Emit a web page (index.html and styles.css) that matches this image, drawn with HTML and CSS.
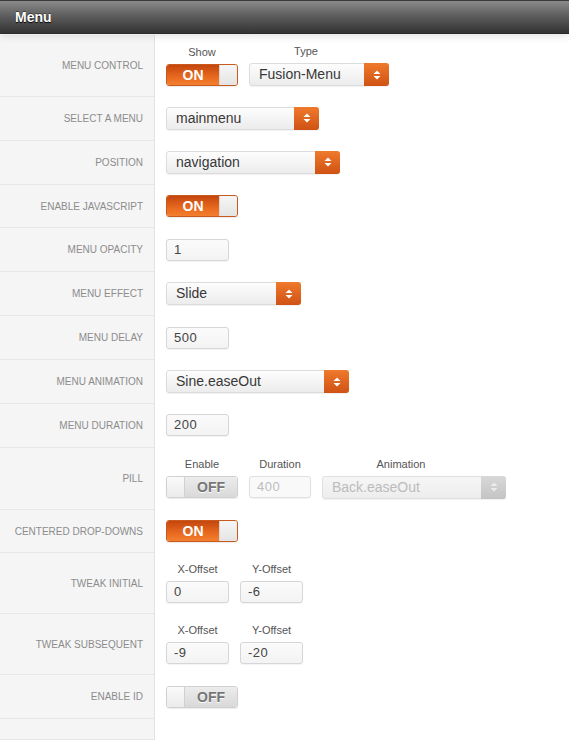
FILE: index.html
```html
<!DOCTYPE html>
<html>
<head>
<meta charset="utf-8">
<link rel="stylesheet" href="styles.css">
</head>
<body>
<div class="panel">
  <div class="header">Menu</div>
  <div class="rows">
    <div class="row">
      <div class="label">Menu Control</div>
      <div class="field">
        <div class="group"><span class="cap">Show</span><div class="toggle on"><span class="tg-text">ON</span><span class="knob"></span></div></div>
        <div class="group"><span class="cap cap-sel">Type</span><div class="select w140"><span class="sel-text">Fusion-Menu</span><span class="arrow"><svg width="8" height="12" viewBox="0 0 8 12"><path d="M4 1.5L7.5 5H0.5Z M4 10.5L7.5 7H0.5Z" fill="#fff"/></svg></span></div></div>
      </div>
    </div>
    <div class="row">
      <div class="label">Select a Menu</div>
      <div class="field">
        <div class="select w153"><span class="sel-text">mainmenu</span><span class="arrow"><svg width="8" height="12" viewBox="0 0 8 12"><path d="M4 1.5L7.5 5H0.5Z M4 10.5L7.5 7H0.5Z" fill="#fff"/></svg></span></div>
      </div>
    </div>
    <div class="row">
      <div class="label">Position</div>
      <div class="field">
        <div class="select w174"><span class="sel-text">navigation</span><span class="arrow"><svg width="8" height="12" viewBox="0 0 8 12"><path d="M4 1.5L7.5 5H0.5Z M4 10.5L7.5 7H0.5Z" fill="#fff"/></svg></span></div>
      </div>
    </div>
    <div class="row">
      <div class="label">Enable Javascript</div>
      <div class="field">
        <div class="toggle on"><span class="tg-text">ON</span><span class="knob"></span></div>
      </div>
    </div>
    <div class="row">
      <div class="label">Menu Opacity</div>
      <div class="field"><div class="input">1</div></div>
    </div>
    <div class="row">
      <div class="label">Menu Effect</div>
      <div class="field">
        <div class="select w135"><span class="sel-text">Slide</span><span class="arrow"><svg width="8" height="12" viewBox="0 0 8 12"><path d="M4 1.5L7.5 5H0.5Z M4 10.5L7.5 7H0.5Z" fill="#fff"/></svg></span></div>
      </div>
    </div>
    <div class="row">
      <div class="label">Menu Delay</div>
      <div class="field"><div class="input">500</div></div>
    </div>
    <div class="row">
      <div class="label">Menu Animation</div>
      <div class="field">
        <div class="select w183"><span class="sel-text">Sine.easeOut</span><span class="arrow"><svg width="8" height="12" viewBox="0 0 8 12"><path d="M4 1.5L7.5 5H0.5Z M4 10.5L7.5 7H0.5Z" fill="#fff"/></svg></span></div>
      </div>
    </div>
    <div class="row">
      <div class="label">Menu Duration</div>
      <div class="field"><div class="input">200</div></div>
    </div>
    <div class="row">
      <div class="label">Pill</div>
      <div class="field">
        <div class="group"><span class="cap">Enable</span><div class="toggle off"><span class="knob"></span><span class="tg-text">OFF</span></div></div>
        <div class="group"><span class="cap">Duration</span><div class="input disabled w62">400</div></div>
        <div class="group"><span class="cap cap-sel">Animation</span><div class="select disabled w184"><span class="sel-text">Back.easeOut</span><span class="arrow"><svg width="8" height="12" viewBox="0 0 8 12"><path d="M4 1.5L7.5 5H0.5Z M4 10.5L7.5 7H0.5Z" fill="#fff"/></svg></span></div></div>
      </div>
    </div>
    <div class="row">
      <div class="label">Centered Drop-Downs</div>
      <div class="field">
        <div class="toggle on"><span class="tg-text">ON</span><span class="knob"></span></div>
      </div>
    </div>
    <div class="row">
      <div class="label">Tweak Initial</div>
      <div class="field">
        <div class="group"><span class="cap">X-Offset</span><div class="input">0</div></div>
        <div class="group"><span class="cap">Y-Offset</span><div class="input">-6</div></div>
      </div>
    </div>
    <div class="row">
      <div class="label">Tweak Subsequent</div>
      <div class="field">
        <div class="group"><span class="cap">X-Offset</span><div class="input">-9</div></div>
        <div class="group"><span class="cap">Y-Offset</span><div class="input">-20</div></div>
      </div>
    </div>
    <div class="row">
      <div class="label">Enable ID</div>
      <div class="field">
        <div class="toggle off"><span class="knob"></span><span class="tg-text">OFF</span></div>
      </div>
    </div>
    <div class="row row-end">
      <div class="label"></div>
      <div class="field"></div>
    </div>
  </div>
</div>
</body>
</html>
```

FILE: styles.css
```css
html, body {
  margin: 0;
  padding: 0;
  background: #fff;
}
body {
  font-family: "Liberation Sans", Arial, sans-serif;
  color: #333;
}
.panel {
  width: 569px;
}
.header {
  position: relative;
  z-index: 1;
  height: 32px;
  border-top: 1px solid #3a3a3a;
  border-bottom: 1px solid #2a2a2a;
  background: linear-gradient(#8a8a8a, #5a5a5a 50%, #333 100%);
  color: #fff;
  font-weight: bold;
  font-size: 14px;
  line-height: 32px;
  padding-left: 15px;
  text-shadow: 0 1px 1px #000, 0 -1px 0 rgba(0,0,0,.4);
  box-shadow: 0 2px 8px rgba(0,0,0,.12);
}
.rows {
  padding-top: 1px;
}
.row {
  display: grid;
  grid-template-columns: 155px 1fr;
}
.label {
  box-sizing: border-box;
  background: #f5f5f5;
  border-right: 1px solid #e2e2e2;
  border-bottom: 1px solid #e6e6e6;
  display: flex;
  align-items: center;
  justify-content: flex-end;
  padding-right: 11px;
  font-size: 10px;
  text-transform: uppercase;
  color: #8c8c8c;
}
.field {
  display: flex;
  align-items: center;
  gap: 11px;
  min-height: 23px;
  padding: 10px 0 10.86px 11px;
}
.row-end .label {
  height: 21px;
}
.row-end .field {
  padding: 0;
  min-height: 0;
}
.group {
  display: flex;
  flex-direction: column;
}
.cap {
  display: block;
  font-size: 11px;
  line-height: 13px;
  color: #555;
  text-align: center;
  margin-bottom: 5px;
}
.cap-sel {
  padding-right: 26px;
}
/* toggle */
.toggle {
  box-sizing: border-box;
  width: 72px;
  height: 22px;
  border-radius: 3px;
  display: flex;
  overflow: hidden;
  border: 1px solid #d0d0d0;
  box-shadow: 0 1px 1px rgba(0,0,0,.08);
}
.tg-text {
  width: 52px;
  text-align: center;
  font-weight: bold;
  font-size: 14px;
  line-height: 20px;
}
.knob {
  flex: 1;
  background: linear-gradient(#f6f6f6, #e4e4e4);
}
.toggle.on {
  border-color: #c75a1c;
}
.toggle.on .tg-text {
  color: #fff;
  background: linear-gradient(#c4460d, #e86a20 60%, #f37f2f);
}
.toggle.on .knob {
  border-left: 1px solid #d7d7d7;
  border-radius: 0 2px 2px 0;
}
.toggle.off .tg-text {
  color: #777;
  background: linear-gradient(#ececec, #d9d9d9);
  text-shadow: 0 1px 0 #fff;
}
.toggle.off .knob {
  border-right: 1px solid #d0d0d0;
  background: linear-gradient(#fafafa, #ebebeb);
}
/* select */
.select {
  box-sizing: border-box;
  height: 23px;
  border: 1px solid #dcdcdc;
  border-radius: 3px;
  display: flex;
  background: linear-gradient(#fdfdfd, #ececec);
  box-shadow: 0 1px 1px rgba(0,0,0,.06);
}
.sel-text {
  flex: 1;
  font-size: 14px;
  line-height: 21px;
  padding-left: 9px;
  color: #383838;
}
.arrow {
  width: 25px;
  margin: -1px -1px -1px 0;
  border-radius: 0 3px 3px 0;
  background: linear-gradient(#ef7a2c, #cf5214);
  display: flex;
  align-items: center;
  justify-content: center;
}
.select.disabled {
  background: linear-gradient(#f6f6f6, #ededed);
  border-color: #e0e0e0;
}
.select.disabled .sel-text {
  color: #bcbcbc;
}
.select.disabled .arrow {
  background: linear-gradient(#d8d8d8, #c4c4c4);
}
.select.disabled .arrow svg {
  opacity: .6;
}
.w135 { width: 135px; }
.w140 { width: 140px; }
.w153 { width: 153px; }
.w174 { width: 174px; }
.w183 { width: 183px; }
.w184 { width: 184px; }
/* input */
.input {
  box-sizing: border-box;
  width: 63px;
  height: 22px;
  border: 1px solid #d6d6d6;
  border-radius: 3px;
  background: linear-gradient(#fbfbfb, #f3f3f3);
  box-shadow: 0 1px 1px rgba(0,0,0,.05);
  font-size: 13px;
  line-height: 20px;
  padding-left: 7px;
  color: #444;
  letter-spacing: 0.5px;
}
.input.w62 { width: 62px; }
.input.disabled {
  color: #bdbdbd;
  background: #f9f9f9;
  border-color: #e0e0e0;
}
```
